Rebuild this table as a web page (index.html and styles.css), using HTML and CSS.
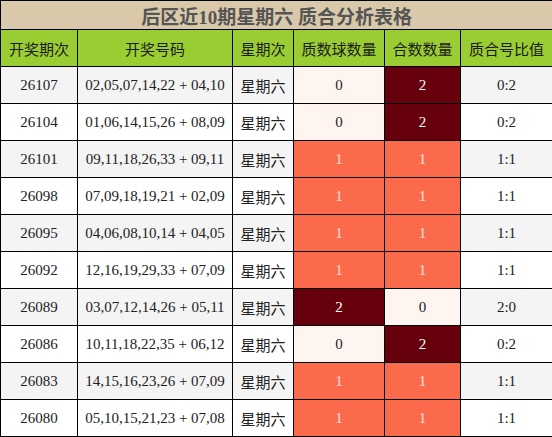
FILE: index.html
```html
<!DOCTYPE html>
<html lang="zh">
<head>
<meta charset="utf-8">
<title>后区近10期星期六 质合分析表格</title>
<link rel="stylesheet" href="styles.css">
</head>
<body>
<table class="grid">
  <colgroup>
    <col class="c1"><col class="c2"><col class="c3"><col class="c4"><col class="c5"><col class="c6">
  </colgroup>
  <thead>
    <tr class="title-row"><th colspan="6" class="title">后区近10期星期六 质合分析表格</th></tr>
    <tr class="head-row">
      <th>开奖期次</th><th>开奖号码</th><th>星期次</th><th>质数球数量</th><th>合数数量</th><th>质合号比值</th>
    </tr>
  </thead>
  <tbody>
    <tr class="odd"><td>26107</td><td>02,05,07,14,22 + 04,10</td><td>星期六</td><td class="h0">0</td><td class="h2">2</td><td>0:2</td></tr>
    <tr><td>26104</td><td>01,06,14,15,26 + 08,09</td><td>星期六</td><td class="h0">0</td><td class="h2">2</td><td>0:2</td></tr>
    <tr class="odd"><td>26101</td><td>09,11,18,26,33 + 09,11</td><td>星期六</td><td class="h1">1</td><td class="h1">1</td><td>1:1</td></tr>
    <tr><td>26098</td><td>07,09,18,19,21 + 02,09</td><td>星期六</td><td class="h1">1</td><td class="h1">1</td><td>1:1</td></tr>
    <tr class="odd"><td>26095</td><td>04,06,08,10,14 + 04,05</td><td>星期六</td><td class="h1">1</td><td class="h1">1</td><td>1:1</td></tr>
    <tr><td>26092</td><td>12,16,19,29,33 + 07,09</td><td>星期六</td><td class="h1">1</td><td class="h1">1</td><td>1:1</td></tr>
    <tr class="odd"><td>26089</td><td>03,07,12,14,26 + 05,11</td><td>星期六</td><td class="h2">2</td><td class="h0">0</td><td>2:0</td></tr>
    <tr><td>26086</td><td>10,11,18,22,35 + 06,12</td><td>星期六</td><td class="h0">0</td><td class="h2">2</td><td>0:2</td></tr>
    <tr class="odd"><td>26083</td><td>14,15,16,23,26 + 07,09</td><td>星期六</td><td class="h1">1</td><td class="h1">1</td><td>1:1</td></tr>
    <tr><td>26080</td><td>05,10,15,21,23 + 07,08</td><td>星期六</td><td class="h1">1</td><td class="h1">1</td><td>1:1</td></tr>
  </tbody>
</table>
</body>
</html>
```

FILE: styles.css
```css
html, body {
  margin: 0;
  padding: 0;
  background: #ffffff;
}

.grid {
  width: 552px;
  border-collapse: collapse;
  table-layout: fixed;
  font-family: "Liberation Serif", "Noto Sans CJK SC", serif;
  font-size: 15px;
  color: #222222;
}

.c1 { width: 77px; }
.c2 { width: 155px; }
.c3 { width: 61px; }
.c4 { width: 91px; }
.c5 { width: 76px; }
.c6 { width: 92px; }

.grid th,
.grid td {
  border: 1px solid #000000;
  padding: 0;
  text-align: center;
  vertical-align: middle;
}

.title {
  height: 28px;
  background: #d9c9aa;
  color: #555555;
  font-size: 19px;
  font-weight: bold;
}

.head-row th {
  height: 36px;
  background: #9acd32;
  font-weight: normal;
  color: #1a1a1a;
}

.grid td {
  height: 36px;
  background: #ffffff;
}

.grid tr.odd td {
  background: #f4f4f4;
}

.grid tr td.h0 { background: #fff5f0; color: #222222; }
.grid tr td.h1 { background: #fb6a4a; color: #fde4dc; }
.grid tr td.h2 { background: #67000d; color: #ffffff; }
```
